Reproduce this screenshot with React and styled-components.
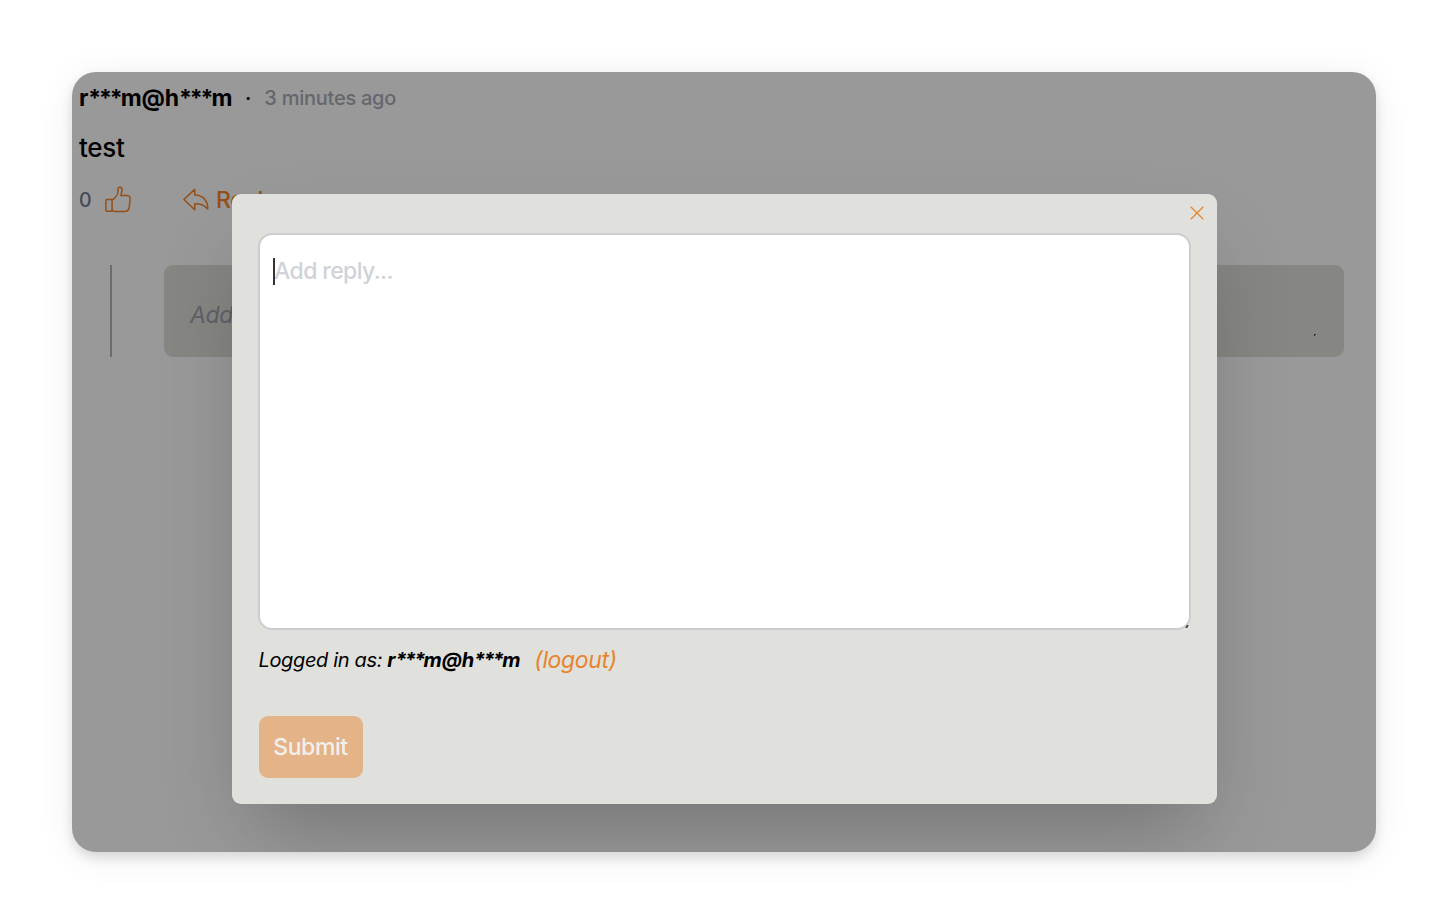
import React from 'react';
import styled, { createGlobalStyle } from 'styled-components';

const Global = createGlobalStyle`
  * { box-sizing: border-box; }
  body {
    margin: 0;
    background: #fff;
    font-family: Inter, "Liberation Sans", sans-serif;
    color: #000;
    -webkit-font-smoothing: antialiased;
  }
`;

const Page = styled.main`
  width: 1448px;
  height: 924px;
  padding: 72px;
  overflow: hidden;
`;

const Card = styled.section`
  position: relative;
  width: 1304px;
  height: 780px;
  padding: 10px 32px 0 7px;
  border-radius: 24px;
  background: #999;
  box-shadow: 0 6px 12px rgba(0, 0, 0, 0.12), 0 4px 36px rgba(0, 0, 0, 0.07);
`;

const Clip = styled.div`
  position: absolute;
  inset: 0;
  border-radius: 24px;
  overflow: hidden;
`;

const Meta = styled.header`
  display: flex;
  align-items: center;
  height: 32px;
`;

const Author = styled.strong`
  font-size: 23px;
  font-weight: 700;
  letter-spacing: -0.1px;
`;

const Stars = styled.span`
  letter-spacing: -0.09em;
`;

const Dot = styled.span`
  width: 32px;
  text-align: center;
  font-size: 20px;
  font-weight: 600;
`;

const Time = styled.time`
  font-size: 20px;
  font-weight: 450;
  letter-spacing: -0.25px;
  color: #64676e;
`;

const Body = styled.p`
  margin: 18px 0 0;
  font-size: 26px;
  font-weight: 450;
  letter-spacing: -0.3px;
  line-height: 32px;
`;

const Actions = styled.div`
  display: flex;
  align-items: center;
  height: 32px;
  margin-top: 20px;
  color: #955019;
`;

const Count = styled.span`
  width: 26px;
  font-size: 19.5px;
  font-weight: 450;
  color: #444955;
`;

const ReplyLink = styled.span`
  display: flex;
  align-items: center;
  gap: 7px;
  margin-left: 52px;
  font-size: 23px;
  font-weight: 500;
  letter-spacing: -0.3px;
`;

const Thread = styled.div`
  display: flex;
  height: 92px;
  margin: 49px 0 0 31px;
  border-left: 2px solid #6c6c70;
  padding-left: 52px;
`;

const ReplyBox = styled.div`
  position: relative;
  flex: 1;
  display: flex;
  align-items: center;
  padding: 8px 26px 0;
  border-radius: 9px;
  background: #868683;
  color: #5e6167;
  font-size: 23px;
  font-style: italic;
  font-weight: 450;
  letter-spacing: -0.4px;
`;

const Grip = styled.i`
  position: absolute;
  right: ${(p) => p.$right};
  bottom: ${(p) => p.$bottom};
  width: 2px;
  height: ${(p) => (p.$slanted ? '3px' : '2px')};
  background: ${(p) => (p.$slanted ? '#404040' : '#303030')};
  transform: ${(p) => (p.$slanted ? 'skewX(-25deg)' : 'none')};
  clip-path: ${(p) => (p.$slanted ? 'none' : 'polygon(0 0, 100% 0, 100% 50%, 50% 50%, 50% 100%, 0 100%)')};
`;

const Modal = styled.div`
  position: absolute;
  left: 160px;
  top: 122px;
  width: 985px;
  height: 610px;
  padding: 39px 26px 26px 26.5px;
  border-radius: 9px;
  background: #e0e1dc;
  box-shadow: 0 41px 82px -20px rgba(0, 0, 0, 0.25);
`;

const Close = styled.button`
  position: absolute;
  right: 13px;
  top: 12px;
  display: flex;
  padding: 0;
  border: 0;
  background: none;
  color: #e8842e;
`;

const Editor = styled.div`
  position: relative;
  height: 397px;
  margin-left: -0.5px;
  padding: 22px 14px;
  border: 2px solid #cdcdcf;
  border-radius: 14px;
  background: #fff;
  color: #d0d2d8;
  font-size: 23px;
  font-weight: 450;
  letter-spacing: -0.6px;
  line-height: 28px;
`;

const Caret = styled.span`
  position: absolute;
  left: 13px;
  top: 23px;
  width: 2px;
  height: 27px;
  background: #333;
`;

const Login = styled.div`
  display: flex;
  align-items: center;
  height: 32px;
  margin-top: 14px;
  font-size: 20px;
  font-style: italic;
  font-weight: 450;
  letter-spacing: -0.35px;
  white-space: pre;
`;

const LoginName = styled.strong`
  font-weight: 700;
  letter-spacing: -0.15px;
`;

const Logout = styled.a`
  margin-left: 14px;
  font-size: 23px;
  color: #e8842e;
`;

const Submit = styled.button`
  display: flex;
  align-items: center;
  justify-content: center;
  width: 104px;
  height: 62px;
  margin-top: 39.5px;
  padding: 0;
  border: 0;
  border-radius: 9px;
  background: #e4b388;
  color: #f2f0ed;
  font-family: inherit;
  font-size: 23px;
  font-weight: 500;
  letter-spacing: -0.4px;
`;

const ThumbIcon = () => (
  <svg width="26" height="27" viewBox="0 0.7 26 27" fill="none" stroke="currentColor" strokeWidth="1.5" strokeLinejoin="round" strokeLinecap="round" overflow="visible">
    <path d="M1.9 13.2H7.1V25H1.9C1.2 25 .9 24.7 .9 24V14.2C.9 13.5 1.2 13.2 1.9 13.2Z" />
    <path d="M7.1 13.8C10.3 11.7 13 7.8 13 5.2V2.8C13 .2 17 .1 17 3.3C17 5.6 16.4 7.7 15.8 9.3H22.3C25 9.3 25.4 11.2 25.1 13.4L24.3 20.6C24 23.6 22.6 25.1 20 25.1H10.2C8.9 25.1 8 24.9 7.1 23.9" />
  </svg>
);

const ReplyIcon = () => (
  <svg width="26" height="23" viewBox="0 0.5 26 23" fill="none" stroke="currentColor" strokeWidth="1.5" strokeLinejoin="round" overflow="visible">
    <path d="M.9 11 11.7.9V6.6C20.5 6.7 25 12.9 24.8 20.6C21.9 16.9 17.5 15 11.7 15.2V21.2Z" />
  </svg>
);

const CloseIcon = () => (
  <svg width="14" height="14" viewBox="0 0 14 14" fill="none" stroke="currentColor" strokeWidth="1.3">
    <path d="M.7.7 13.3 13.3M13.3.7.7 13.3" />
  </svg>
);

const MaskedEmail = () => (
  <>r<Stars>***</Stars>m@h<Stars>***</Stars>m</>
);

export default function App() {
  return (
    <>
      <Global />
      <Page>
        <Card>
          <Meta>
            <Author><MaskedEmail /></Author>
            <Dot>·</Dot>
            <Time>3 minutes ago</Time>
          </Meta>
          <Body>test</Body>
          <Actions>
            <Count>0</Count>
            <ThumbIcon />
            <ReplyLink><ReplyIcon />Reply</ReplyLink>
          </Actions>
          <Thread>
            <ReplyBox>Add reply...<Grip $right="28px" $bottom="21px" /></ReplyBox>
          </Thread>
          <Clip>
            <Modal>
              <Close aria-label="Close"><CloseIcon /></Close>
              <Editor>
                <Caret />
                Add reply...
                <Grip $right="1px" $bottom="0" $slanted />
              </Editor>
              <Login>
                <span>Logged in as: </span>
                <LoginName><MaskedEmail /></LoginName>
                <Logout>(logout)</Logout>
              </Login>
              <Submit>Submit</Submit>
            </Modal>
          </Clip>
        </Card>
      </Page>
    </>
  );
}
